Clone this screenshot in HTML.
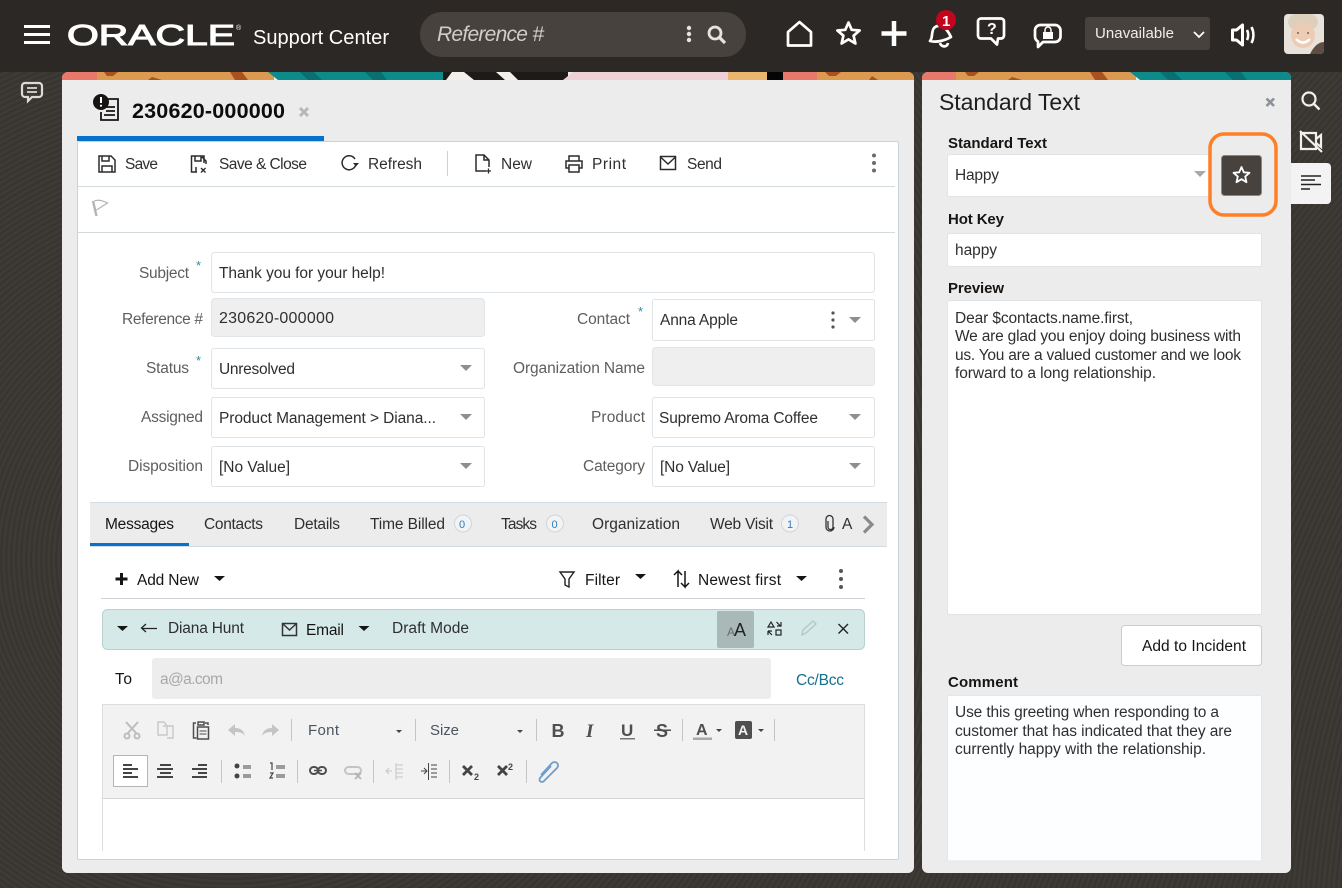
<!DOCTYPE html>
<html><head><meta charset="utf-8"><title>Support Center</title>
<style>
html,body{margin:0;padding:0;width:1342px;height:888px;overflow:hidden;background:#3a3632}
#bg{position:absolute;left:0;top:0;width:1342px;height:888px;background:repeating-radial-gradient(circle at 230px 560px,#3e3a36 0 2.5px,#383430 2.5px 5px)}
#bgr{position:absolute;left:1291px;top:72px;width:51px;height:816px;background:repeating-radial-gradient(circle at 1000px 900px,#3e3a36 0 2.5px,#383430 2.5px 5px)}
svg{position:absolute;left:0;top:0}
text{font-family:"Liberation Sans",sans-serif;font-size:15.500px;fill:#3a3a3a;white-space:pre}
.d{fill:#161513}.m{fill:#5f5e5c}.b{font-weight:bold;fill:#161513}.t{fill:#2f2f2f}
.ic{fill:none;stroke:#2b2b2b;stroke-width:1.5}
.w{fill:none;stroke:#fff;stroke-width:2.700;stroke-linejoin:round}
.inp{fill:#fff;stroke:#dfe4e8;stroke-width:1}
.dis{fill:#efefef;stroke:#e2e4e6;stroke-width:1}
.ar{fill:#8f8f8f}
.k{fill:#161513}
.s{stroke:#c4c4c4;stroke-width:1}
.g{fill:none;stroke:#bdbdbd;stroke-width:2}
</style></head><body>
<div id="bg"></div><div id="bgr"></div>
<svg width="1342" height="888" viewBox="0 0 1342 888" xmlns="http://www.w3.org/2000/svg">
<defs>
<clipPath id="cl"><path d="M62 80V78a6 6 0 0 1 6-6H908a6 6 0 0 1 6 6v2z"/></clipPath>
<clipPath id="cr"><path d="M922 80V78a6 6 0 0 1 6-6H1285a6 6 0 0 1 6 6v2z"/></clipPath>
<clipPath id="av"><rect x="1284" y="14" width="40" height="40" rx="4"/></clipPath>
</defs>

<!-- header -->
<rect x="0" y="0" width="1342" height="72" fill="#2b2825"/>
<g fill="#fff"><rect x="24" y="25" width="26" height="3"/><rect x="24" y="33" width="26" height="3"/><rect x="24" y="41" width="26" height="3"/></g>
<text x="67" y="45" textLength="168" lengthAdjust="spacingAndGlyphs" style="font-size:29px;fill:#fff;stroke:#fff;stroke-width:1.100">ORACLE</text>
<text x="236" y="30" style="font-size:7px;fill:#fff">®</text>
<text x="253" y="44" textLength="136" lengthAdjust="spacingAndGlyphs" style="font-size:20px;fill:#fff">Support Center</text>
<rect x="420" y="12" width="326" height="45" rx="22" fill="#47423e"/>
<text x="437" y="41" textLength="107" style="font-size:21px;font-style:italic;fill:#d0cdca">Reference #</text>
<g fill="#e6e4e1"><circle cx="689" cy="28" r="2.200"/><circle cx="689" cy="34" r="2.200"/><circle cx="689" cy="40" r="2.200"/></g>
<circle cx="715" cy="33" r="6" fill="none" stroke="#e6e4e1" stroke-width="2.800"/><path d="M719.500 37.500L725 43" stroke="#e6e4e1" stroke-width="3.200"/>
<path class="w" d="M788 45.500V32L799.500 22 811 32V45.500z"/>
<path class="w" d="M848.500 22.500l3.200 7.300 7.900.7-6 5.200 1.800 7.800-6.900-4.100-6.900 4.100 1.800-7.800-6-5.200 7.900-.7z"/>
<path d="M894 21v25M881.500 33.500h25" stroke="#fff" stroke-width="4.500" fill="none"/>
<path class="w" d="M930 41c3-3 1-9 4-13 3-3 8-3 11 0 3 3 5 7 6 9-5 3-14 6-21 4zM940 43c1 4 7 5 8 0"/>
<circle cx="946" cy="20" r="10" fill="#c2041c"/>
<text x="942" y="26" textLength="8" style="font-size:15px;font-weight:bold;fill:#fff">1</text>
<path class="w" d="M981 18.500h20a3 3 0 0 1 3 3v14a3 3 0 0 1-3 3h-3l-1 6-6-6h-10a3 3 0 0 1-3-3v-14a3 3 0 0 1 3-3z" stroke="#f1f0ee"/>
<text x="987" y="34" textLength="9" style="font-size:16px;font-weight:bold;fill:#fff">?</text>
<path class="w" d="M1041 25h14a5.500 5.500 0 0 1 5.500 5.500v6a5.500 5.500 0 0 1-5.500 5.500h-12l-5 5v-5.500c-1.800-1-3-2.800-3-5v-6a5.500 5.500 0 0 1 6-5.500z"/>
<rect x="1043" y="32" width="10" height="7" fill="#fff"/><path d="M1045 32v-2a3 3 0 0 1 6 0v2" fill="none" stroke="#fff" stroke-width="1.500"/>
<rect x="1085" y="17" width="125" height="33" rx="3" fill="#47423e"/>
<text x="1095" y="38" textLength="79" style="font-size:15px;fill:#f0eeec">Unavailable</text>
<path d="M1194 32l5 5 5-5" fill="none" stroke="#fff" stroke-width="1.800"/>
<path d="M1232.500 30h4l6-5v20l-6-5h-4z" fill="#2b2825" stroke="#fff" stroke-width="3" stroke-linejoin="round"/>
<path d="M1247 30c1.500 3 1.500 7 0 10M1251.500 27c2.500 5 2.500 11 0 16" fill="none" stroke="#fff" stroke-width="2.600"/>
<g clip-path="url(#av)"><rect x="1284" y="14" width="40" height="40" fill="#e8e2da"/>
<ellipse cx="1303" cy="22" rx="15" ry="10" fill="#dcd0bd"/><ellipse cx="1303" cy="35" rx="12" ry="13" fill="#ecccb4"/><path d="M1296 39q7 7 14 0" stroke="#fff" stroke-width="2.500" fill="none"/><path d="M1310 54q6-12 14-12v12z" fill="#5d4d42"/><circle cx="1298" cy="33" r="1" fill="#7a6352"/><circle cx="1308" cy="33" r="1" fill="#7a6352"/></g>

<!-- rail -->
<path d="M25 83h14a3 3 0 0 1 3 3v8a3 3 0 0 1-3 3h-7l-4 4v-4h-3a3 3 0 0 1-3-3v-8a3 3 0 0 1 3-3z" fill="none" stroke="#dcdad7" stroke-width="2.200"/>
<path d="M27 88h10M27 92h10" stroke="#dcdad7" stroke-width="1.800"/>

<!-- left panel -->
<path d="M62 80V78a6 6 0 0 1 6-6H908a6 6 0 0 1 6 6V867a6 6 0 0 1-6 6H68a6 6 0 0 1-6-6z" fill="#ececec"/>
<g clip-path="url(#cl)">
<rect x="62" y="72" width="36" height="8" fill="#e8796a"/>
<rect x="97" y="72" width="177" height="8" fill="#dc9a50"/>
<path d="M104 72h14l-5 4h-6zM148 80l4-3 10 3zM230 72h12l6 8h-13z" fill="#a9521f"/>
<path d="M268 72h180v8H278z" fill="#0d8a8a"/>
<path d="M300 72h14l8 8h-14zM365 72h16l6 8h-14z" fill="#0a6f70"/>
<rect x="443" y="72" width="125" height="8" fill="#1d1a18"/>
<path d="M446 80l6-8h12l10 8zM505 80l-9-8h14l8 8z" fill="#f3f0ec"/>
<path d="M563 80l10-8h156v8z" fill="#efd0d6"/>
<rect x="728" y="72" width="40" height="8" fill="#eab56e"/>
<rect x="767" y="72" width="17" height="8" fill="#050505"/>
<rect x="783" y="72" width="35" height="8" fill="#e8796a"/>
<rect x="817" y="72" width="97" height="8" fill="#dc9a50"/>
<path d="M825 72h16l-5 4h-7zM872 76l6 4h-9z" fill="#a9521f"/>
</g>

<path d="M107 99h11v21h-17v-8" fill="none" stroke="#161513" stroke-width="1.800"/>
<path d="M104 107h11M106 111h9M104 115h11" stroke="#161513" stroke-width="1.800"/>
<circle cx="101" cy="102" r="8" fill="#161513"/><path d="M101 97v6" stroke="#fff" stroke-width="2"/><circle cx="101" cy="105.700" r="1.100" fill="#fff"/>
<text x="132" y="118" textLength="153" style="font-size:21.500px;font-weight:bold;fill:#0c0c0c">230620-000000</text>
<path d="M300 108l8 8M308 108l-8 8" stroke="#b9b9b9" stroke-width="3"/>
<rect x="77.500" y="141.500" width="821" height="718" rx="2" fill="#fff" stroke="#c8d2da"/>
<rect x="77" y="136" width="247" height="5" fill="#0572ce"/>
<path d="M78 186.500H895M78 232.500H895" stroke="#d3dade" fill="none"/>

<!-- toolbar -->
<path class="ic" d="M99 156h12l4 4v12H99zM102 156v5h7v-5M102 172v-6h10v6"/>
<text class="t" x="125" y="169" textLength="33">Save</text>
<path class="ic" d="M204 163v-7h-12.500v16H197M195 156v5h6v-5M196 172v-5M202 157l4 4v3"/>
<path d="M201 168l4.500 4.500M205.500 168l-4.500 4.500" stroke="#2b2b2b" stroke-width="1.400"/>
<text class="t" x="219" y="169" textLength="88">Save &amp; Close</text>
<path class="ic" d="M355 159a7 7 0 1 0 1 5"/><path d="M353 163h6l-3 3.500z" fill="#2b2b2b"/>
<text class="t" x="368" y="169" textLength="54">Refresh</text>
<path d="M447.500 151v25" stroke="#c8d2da"/>
<path class="ic" d="M486 171h-10v-16h8l5 5v7M484 155v5h5"/><path d="M486 171h5M488.500 168.500v5" stroke="#2b2b2b" stroke-width="1.300"/>
<text class="t" x="501" y="169" textLength="31">New</text>
<path class="ic" d="M569 161v-5h10v5M569 168h-3v-7h16v7h-3M569 165h10v7h-10z"/>
<text class="t" x="592" y="169" textLength="34">Print</text>
<path class="ic" d="M660.500 156.500h15v13h-15zM660.500 157l7.500 7 7.500-7"/>
<text class="t" x="687" y="169" textLength="35">Send</text>
<g fill="#6b6b6b"><circle cx="874" cy="155.500" r="2"/><circle cx="874" cy="163" r="2"/><circle cx="874" cy="170.500" r="2"/></g>
<path d="M93 201l3.500 15" stroke="#b4b4b4" stroke-width="2.400"/><path d="M94.500 201c4-2 9 0 13 2l-11 7" fill="none" stroke="#b4b4b4" stroke-width="1.300"/>

<!-- form -->
<text class="m" x="139" y="278" textLength="50">Subject</text>
<text x="196" y="270" style="font-size:13px;fill:#2e8ba8">*</text>
<rect class="inp" x="211.500" y="252.500" width="663" height="40" rx="3"/>
<text class="t" x="219" y="278" textLength="166">Thank you for your help!</text>

<text class="m" x="122" y="324" textLength="81">Reference #</text>
<rect class="dis" x="211.500" y="298.500" width="273" height="38" rx="3"/>
<text class="t" x="219" y="323" textLength="115" style="font-size:16px">230620-000000</text>

<text class="m" x="146" y="373" textLength="43">Status</text>
<text x="196" y="365" style="font-size:13px;fill:#2e8ba8">*</text>
<rect class="inp" x="211.500" y="348.500" width="273" height="40" rx="2"/>
<text class="t" x="219" y="374" textLength="76">Unresolved</text>
<path class="ar" d="M460 365h12l-6 6z"/>

<text class="m" x="141" y="422" textLength="62">Assigned</text>
<rect class="inp" x="211.500" y="397.500" width="273" height="40" rx="2"/>
<text class="t" x="219" y="423" textLength="217">Product Management &gt; Diana...</text>
<path class="ar" d="M460 414h12l-6 6z"/>

<text class="m" x="128" y="471" textLength="75">Disposition</text>
<rect class="inp" x="211.500" y="446.500" width="273" height="40" rx="2"/>
<text class="t" x="219" y="472" textLength="71">[No Value]</text>
<path class="ar" d="M460 463h12l-6 6z"/>

<text class="m" x="577" y="324" textLength="53">Contact</text>
<text x="638" y="316" style="font-size:13px;fill:#2e8ba8">*</text>
<rect class="inp" x="652.500" y="299.500" width="222" height="41" rx="2"/>
<text class="t" x="660" y="325" textLength="78">Anna Apple</text>
<g fill="#555"><circle cx="833" cy="313" r="1.600"/><circle cx="833" cy="320" r="1.600"/><circle cx="833" cy="327" r="1.600"/></g>
<path class="ar" d="M849 317h12l-6 6z"/>

<text class="m" x="513" y="373" textLength="132">Organization Name</text>
<rect class="dis" x="652.500" y="347.500" width="222" height="38" rx="3"/>

<text class="m" x="591" y="422" textLength="54">Product</text>
<rect class="inp" x="652.500" y="397.500" width="222" height="40" rx="2"/>
<text class="t" x="659" y="423" textLength="159">Supremo Aroma Coffee</text>
<path class="ar" d="M849 414h12l-6 6z"/>

<text class="m" x="583" y="471" textLength="62">Category</text>
<rect class="inp" x="652.500" y="446.500" width="222" height="40" rx="2"/>
<text class="t" x="660" y="472" textLength="70">[No Value]</text>
<path class="ar" d="M849 463h12l-6 6z"/>

<!-- tabs -->
<rect x="90" y="502.500" width="797" height="44" fill="#ececec"/>
<path d="M90 502.500H887M90 546.500H887" stroke="#d3dce2"/>
<rect x="90" y="543" width="99" height="3" fill="#0572ce"/>
<text class="d" x="105" y="529" textLength="69">Messages</text>
<text class="t" x="204" y="529" textLength="59">Contacts</text>
<text class="t" x="294" y="529" textLength="46">Details</text>
<text class="t" x="370" y="529" textLength="75">Time Billed</text>
<circle cx="463" cy="523.500" r="8.500" fill="#f2f3f4" stroke="#cfd6dc"/><text x="459" y="528" textLength="7" style="font-size:11px;fill:#2f7fc1">0</text>
<text class="t" x="501" y="529" textLength="36">Tasks</text>
<circle cx="555" cy="523.500" r="8.500" fill="#f2f3f4" stroke="#cfd6dc"/><text x="551.500" y="528" textLength="7" style="font-size:11px;fill:#2f7fc1">0</text>
<text class="t" x="592" y="529" textLength="88">Organization</text>
<text class="t" x="710" y="529" textLength="63">Web Visit</text>
<circle cx="790" cy="523.500" r="8.500" fill="#f2f3f4" stroke="#cfd6dc"/><text x="787" y="528" textLength="6" style="font-size:11px;fill:#2f7fc1">1</text>
<path d="M828 521v6a2.500 2.500 0 0 0 5 0v-8a3.500 3.500 0 0 0-7 0v8a4 4 0 0 0 8 0" fill="none" stroke="#333" stroke-width="1.300"/>
<text class="t" x="842" y="529" textLength="9">A</text>
<path d="M864 516.500l8 8-8 8" fill="none" stroke="#8a8a8a" stroke-width="3.200"/>

<!-- action row -->
<path d="M121.500 573v12M115.500 579h12" stroke="#161513" stroke-width="3"/>
<text class="d" x="137" y="585" textLength="62">Add New</text>
<path class="k" d="M214 576h11l-5.500 5z"/>
<path d="M560 572h14l-5 7v8l-4-2v-6z" fill="none" stroke="#222" stroke-width="1.400"/>
<text class="d" x="585" y="585" textLength="35">Filter</text>
<path class="k" d="M635 574h11l-5.500 5z"/>
<path d="M678 587v-16l-4 4M678 571l4 4M685 571v16l-4-4M685 587l4-4" fill="none" stroke="#161513" stroke-width="1.500"/>
<text class="d" x="698" y="585" textLength="83">Newest first</text>
<path class="k" d="M796 576h11l-5.500 5z"/>
<g fill="#555"><circle cx="841" cy="571" r="2"/><circle cx="841" cy="579" r="2"/><circle cx="841" cy="587" r="2"/></g>
<path d="M101 598.500H865" stroke="#cdd3d8"/>

<!-- draft bar -->
<rect x="102.500" y="609.500" width="762" height="40" rx="5" fill="#d5e9e9" stroke="#b9cfd0"/>
<path class="k" d="M117 626h11l-5.500 5z"/>
<path d="M157 628.500h-15M146 624l-4.500 4 4.500 4" fill="none" stroke="#222" stroke-width="1.300"/>
<text class="t" x="168" y="633" textLength="76">Diana Hunt</text>
<path d="M282.500 623.500h14v12h-14zM283 624l6.500 6 6.500-6" fill="none" stroke="#333" stroke-width="1.500"/>
<text class="d" x="306" y="635" textLength="38">Email</text>
<path class="k" d="M358.500 626h11l-5.500 5z"/>
<text class="t" x="392" y="633" textLength="77">Draft Mode</text>
<rect x="717" y="611" width="37" height="37" rx="2" fill="#a9b9b8"/>
<text x="727" y="636" textLength="9" style="font-size:12px;fill:#6a6a6a">A</text>
<text x="734" y="636" textLength="13" style="font-size:18px;fill:#222">A</text>
<path d="M771 622l-3 5h6zM776.500 622l4 4M781 622v4h-4M768 631l4 4M768 631h4M768 631v4" fill="none" stroke="#222" stroke-width="1.200"/><rect x="776" y="630" width="5" height="5" fill="none" stroke="#222" stroke-width="1.200"/>
<path d="M802 635l1-5 10-9 3 3-10 9z" fill="none" stroke="#b8c3c3" stroke-width="1.300"/>
<path d="M838.500 624l9.500 9.500M848 624l-9.500 9.500" stroke="#222" stroke-width="1.400"/>

<!-- to -->
<text class="d" x="115" y="684" textLength="17">To</text>
<rect x="152" y="658" width="619" height="41" rx="3" fill="#ededed"/>
<text x="160" y="684" textLength="63" style="fill:#a8a8a8">a@a.com</text>
<text x="796" y="685" textLength="48" style="fill:#14708f">Cc/Bcc</text>

<!-- editor -->
<rect x="103" y="705" width="761" height="93" fill="#f2f2f2"/>
<path d="M102.500 851V704.500H864.500V851" fill="none" stroke="#dedede"/>
<path d="M103 798.500H864" stroke="#d4d4d4"/>

<!-- row 1 -->
<path class="g" d="M126 722l10 11M138 722l-10 11"/><circle cx="127" cy="736" r="2.500" class="g" stroke-width="1.500"/><circle cx="137" cy="736" r="2.500" class="g" stroke-width="1.500"/>
<path d="M158 722h6l3 4v9h-9zM163 726h10v12h-6" fill="none" stroke="#c8c8c8" stroke-width="1.400"/>
<path d="M196 723h-2.500v15h3M205 723h3v2M198 722h6v3h-6z" fill="none" stroke="#4d4d4d" stroke-width="1.500"/><rect x="197.500" y="727" width="11" height="12" fill="none" stroke="#4d4d4d" stroke-width="1.500"/><path d="M199.500 731h7M199.500 734h7" stroke="#4d4d4d"/>
<path d="M228 730l7-6v4c6 0 9 3 10 8-2-3-5-4-10-4v4z" fill="#c4c4c4"/>
<path d="M279 730l-7-6v4c-6 0-9 3-10 8 2-3 5-4 10-4v4z" fill="#c4c4c4"/>
<path class="s" d="M291.500 719v22M415.500 719v22M536.500 719v22M682.500 719v22M774.500 719v22"/>
<text x="308" y="735" textLength="31" style="font-size:15px;fill:#4a5560">Font</text>
<path d="M396 730h6l-3 3z" fill="#444"/>
<text x="430" y="735" textLength="29" style="font-size:15px;fill:#4a5560">Size</text>
<path d="M517 730h6l-3 3z" fill="#444"/>
<text x="551.500" y="737" textLength="13" style="font-size:18px;font-weight:bold;fill:#4f4f4f">B</text>
<text x="586" y="737" textLength="11" style="font-family:'Liberation Serif',serif;font-size:19px;font-weight:bold;font-style:italic;fill:#4f4f4f">I</text>
<text x="621" y="736" textLength="13" style="font-size:17px;font-weight:bold;fill:#4f4f4f">U</text><rect x="620" y="738" width="15" height="1.500" fill="#777"/>
<text x="656" y="737" textLength="12" style="font-size:18px;font-weight:bold;fill:#4f4f4f">S</text><rect x="654" y="729.500" width="17" height="1.500" fill="#4f4f4f"/>
<text x="696" y="735" textLength="13" style="font-size:16px;font-weight:bold;fill:#4f4f4f">A</text><rect x="693" y="737.500" width="19" height="2.500" fill="#a9a9a9"/>
<path d="M716 729h6l-3 3z" fill="#444"/>
<rect x="735" y="721" width="17" height="18" rx="2" fill="#4f4f4f"/><text x="738" y="735" textLength="11" style="font-size:14px;font-weight:bold;fill:#f2f2f2">A</text>
<path d="M758 729h6l-3 3z" fill="#444"/>

<!-- row 2 -->
<rect x="113.500" y="755.500" width="34" height="31" fill="#fff" stroke="#b5b5b5"/>
<path d="M123 765h9M123 769h15M123 773h9M123 777h15" stroke="#444" stroke-width="2"/>
<path d="M160 765h11M157 769h16M160 773h11M157 777h16" stroke="#444" stroke-width="2"/>
<path d="M198 765h9M192 769h15M198 773h9M192 777h15" stroke="#444" stroke-width="2"/>
<path class="s" d="M221.500 760v23M297.500 760v23M373.500 760v23M449.500 760v23M526.500 760v23"/>
<g fill="#444"><circle cx="237" cy="766" r="2.500"/><circle cx="237" cy="776" r="2.500"/></g>
<path d="M243 766h8M243 775h8M243 768h8M243 777h8" stroke="#444"/>
<path d="M270 763h2v7M270 773h3l-3 5h3" fill="none" stroke="#444" stroke-width="1.200"/><path d="M276 766h9M276 768h9M276 775h9M276 777h9" stroke="#444"/>
<rect x="310" y="767" width="8" height="7" rx="3.500" fill="none" stroke="#4d4d4d" stroke-width="2"/><rect x="318" y="767" width="8" height="7" rx="3.500" fill="none" stroke="#4d4d4d" stroke-width="2"/><path d="M314 770.500h8" stroke="#4d4d4d" stroke-width="1.500"/>
<rect x="345" y="767" width="16" height="7" rx="3.500" fill="none" stroke="#c4c4c4" stroke-width="2"/><path d="M355 773l6 6M361 773l-6 6" stroke="#b4b4b4" stroke-width="1.800"/>
<path d="M386 771h6M389 768l-3 3 3 3M396 763v17" fill="none" stroke="#c6c6c6"/><path d="M396 765h7M396 769h7M396 773h7M396 777h7" stroke="#c6c6c6"/>
<path d="M421 771h6M424 768l3 3-3 3M428.500 763v17" fill="none" stroke="#444"/><path d="M431 765h6M431 769h6M431 773h6M431 777h6" stroke="#444"/>
<path d="M463 766l9 9M472 766l-9 9" stroke="#444" stroke-width="2.800"/><text x="474" y="780" textLength="6" style="font-size:9px;font-weight:bold;fill:#444">2</text>
<path d="M498 766l9 9M507 766l-9 9" stroke="#444" stroke-width="2.800"/><text x="508" y="770" textLength="6" style="font-size:9px;font-weight:bold;fill:#444">2</text>
<path d="M541 775l11-12a3.500 3.500 0 0 1 5 5l-13 13a2.300 2.300 0 0 1-4-3l11-12" fill="none" stroke="#6f9fc8" stroke-width="1.800"/>

<!-- right panel -->
<path d="M922 80V78a6 6 0 0 1 6-6H1285a6 6 0 0 1 6 6V867a6 6 0 0 1-6 6H928a6 6 0 0 1-6-6z" fill="#ececec"/>
<g clip-path="url(#cr)">
<rect x="922" y="72" width="35" height="8" fill="#e8796a"/>
<rect x="956" y="72" width="180" height="8" fill="#dc9a50"/>
<path d="M965 72h14l-5 4h-6zM1008 80l4-3 10 3zM1090 72h12l6 8h-13z" fill="#a9521f"/>
<path d="M1130 72h161v8H1140z" fill="#0d8a8a"/>
<path d="M1160 72h14l8 8h-14zM1225 72h16l6 8h-14z" fill="#0a6f70"/>
</g>
<text x="939" y="110" textLength="141" style="font-size:23px;fill:#1e1e1e">Standard Text</text>
<path d="M1266.500 98.500l7.500 7.500M1274 98.500l-7.500 7.500" stroke="#8a929a" stroke-width="2.600"/>
<text class="b" x="948" y="148" textLength="99" style="font-size:15px">Standard Text</text>
<rect class="inp" x="947.500" y="154.500" width="262" height="42" rx="2"/>
<text class="t" x="955" y="180" textLength="44">Happy</text>
<path d="M1194 171h12l-6 6z" fill="#a8a8a8"/>
<rect x="1221.500" y="155.500" width="40" height="40" rx="3" fill="#47423e" stroke="#8a8782"/>
<path d="M1241.500 167l2.300 5.300 5.700.5-4.300 3.800 1.300 5.600-5-3-5 3 1.300-5.600-4.300-3.800 5.700-.5z" fill="none" stroke="#fff" stroke-width="1.800" stroke-linejoin="round"/>
<rect x="1210" y="134" width="66" height="81" rx="14" fill="none" stroke="#ff7f27" stroke-width="3.500"/>

<text class="b" x="948" y="224" textLength="56" style="font-size:15px">Hot Key</text>
<rect class="inp" x="947.500" y="233.500" width="314" height="33" rx="2"/>
<text class="t" x="955" y="255" textLength="42">happy</text>
<text class="b" x="948" y="293" textLength="56" style="font-size:15px">Preview</text>
<rect class="inp" x="947.500" y="300.500" width="314" height="314" rx="2"/>
<text class="t" x="955" y="323" textLength="178">Dear $contacts.name.first,</text>
<text class="t" x="955" y="341" textLength="286">We are glad you enjoy doing business with</text>
<text class="t" x="955" y="360" textLength="286">us. You are a valued customer and we look</text>
<text class="t" x="955" y="378" textLength="201">forward to a long relationship.</text>
<rect x="1121.500" y="625.500" width="140" height="40" rx="3" fill="#fff" stroke="#c9ccd0"/>
<text class="d" x="1142" y="651" textLength="104">Add to Incident</text>
<text class="b" x="948" y="687" textLength="70" style="font-size:15px">Comment</text>
<path d="M947.500 861V697.500a2 2 0 0 1 2-2h310a2 2 0 0 1 2 2V861z" fill="#fdfeff" stroke="#e4e7ea"/>
<text class="t" x="955" y="717" textLength="264">Use this greeting when responding to a</text>
<text class="t" x="955" y="736" textLength="277">customer that has indicated that they are</text>
<text class="t" x="955" y="754" textLength="251">currently happy with the relationship.</text>

<!-- right rail -->
<circle cx="1309" cy="99" r="6.500" fill="none" stroke="#f2f0ee" stroke-width="2.200"/><path d="M1314 104l5.500 5.500" stroke="#f2f0ee" stroke-width="2.400"/>
<path d="M1301 133h15v16h-15zM1316 139l5-4v12l-5-4M1300 131l22 21" fill="none" stroke="#f2f0ee" stroke-width="2.200"/>
<path d="M1291 163h36a4 4 0 0 1 4 4v33a4 4 0 0 1-4 4h-36z" fill="#f3f3f3"/>
<path d="M1301 176h20M1301 180h14M1301 184.500h20M1301 189h9" stroke="#222" stroke-width="1.600"/>
</svg>
</body></html>
